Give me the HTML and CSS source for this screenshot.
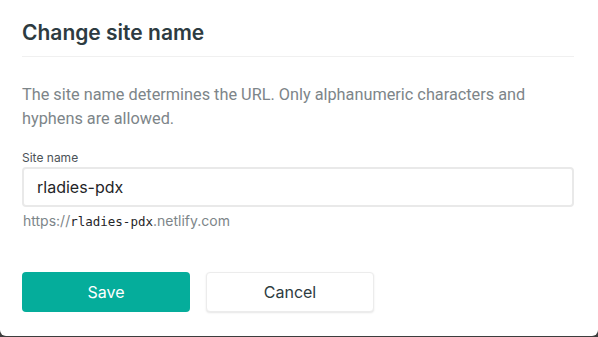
FILE: index.html
```html
<!DOCTYPE html>
<html>
<head>
<meta charset="utf-8">
<link rel="stylesheet" href="styles.css">
</head>
<body>
<div class="modal">
  <h2 class="title">Change site name</h2>
  <p class="desc">The site name determines the URL. Only alphanumeric characters and hyphens are allowed.</p>
  <label class="label" for="site">Site name</label>
  <input class="input" id="site" type="text" value="rladies-pdx">
  <div class="hint">https://<code class="mono">rladies-pdx</code>.netlify.com</div>
  <div class="actions">
    <button class="btn btn-primary">Save</button>
    <button class="btn btn-default">Cancel</button>
  </div>
</div>
</body>
</html>
```
FILE: styles.css
```css
html, body {
  margin: 0;
  padding: 0;
  background: #3d3d3d;
  height: 100%;
}
body {
  font-family: Inter, "Liberation Sans", sans-serif;
}
.modal {
  box-sizing: border-box;
  width: 598px;
  height: 336px;
  background: #fff;
  border-radius: 0 0 6px 6px;
  padding: 20px 24px 0 22px;
}
.title {
  margin: 0;
  font-size: 21px;
  line-height: 26px;
  font-weight: 600;
  color: #2d3b41;
  padding-bottom: 10px;
  border-bottom: 1px solid #f0f0f0;
}
.desc {
  margin: 26px 0 0;
  font-family: Roboto, "Liberation Sans", sans-serif;
  font-size: 16.3px;
  line-height: 24px;
  color: #7d8589;
  padding-right: 20px;
}
.label {
  display: block;
  margin-top: 19px;
  font-size: 12px;
  line-height: 16px;
  color: #4b5357;
}
.input {
  display: block;
  box-sizing: border-box;
  width: 552px;
  height: 40px;
  margin-top: 1px;
  border: 2px solid #e9e9e9;
  border-radius: 4px;
  padding: 0 13px;
  font-family: Inter, "Liberation Sans", sans-serif;
  font-size: 16px;
  color: #1f2528;
  outline: none;
}
.hint {
  margin-top: 4px;
  margin-left: 1px;
  font-size: 14px;
  line-height: 20px;
  color: #7d8589;
}
.mono {
  font-family: "DejaVu Sans Mono", "Liberation Mono", monospace;
  font-size: 12.5px;
  color: #1f2528;
}
.actions {
  display: flex;
  gap: 16px;
  margin-top: 40px;
}
.btn {
  box-sizing: border-box;
  width: 168px;
  height: 40px;
  border-radius: 4px;
  font-family: Inter, "Liberation Sans", sans-serif;
  font-size: 16px;
  cursor: pointer;
}
.btn-primary {
  background: #05ad9b;
  color: #fff;
  border: none;
}
.btn-default {
  background: #fff;
  color: #2d3b41;
  border: 1px solid #ececec;
  box-shadow: 0 1px 2px rgba(0,0,0,0.1);
}
```
